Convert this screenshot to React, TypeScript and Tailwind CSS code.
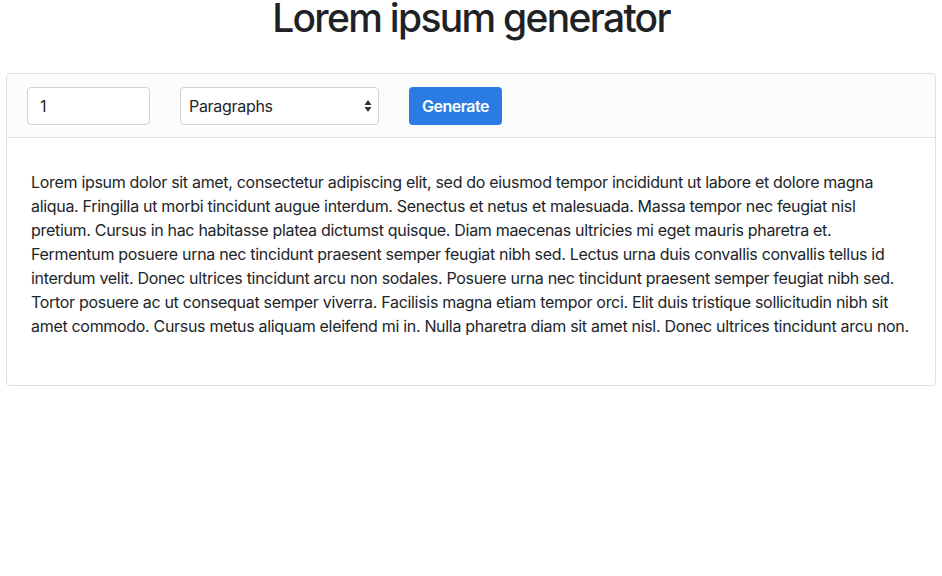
import React from "react";

const lines = [
  "Lorem ipsum dolor sit amet, consectetur adipiscing elit, sed do eiusmod tempor incididunt ut labore et dolore magna",
  "aliqua. Fringilla ut morbi tincidunt augue interdum. Senectus et netus et malesuada. Massa tempor nec feugiat nisl",
  "pretium. Cursus in hac habitasse platea dictumst quisque. Diam maecenas ultricies mi eget mauris pharetra et.",
  "Fermentum posuere urna nec tincidunt praesent semper feugiat nibh sed. Lectus urna duis convallis convallis tellus id",
  "interdum velit. Donec ultrices tincidunt arcu non sodales. Posuere urna nec tincidunt praesent semper feugiat nibh sed.",
  "Tortor posuere ac ut consequat semper viverra. Facilisis magna etiam tempor orci. Elit duis tristique sollicitudin nibh sit",
  "amet commodo. Cursus metus aliquam eleifend mi in. Nulla pharetra diam sit amet nisl. Donec ultrices tincidunt arcu non.",
];

export default function App() {
  return (
    <div
      className="w-[942px] h-[576px] bg-white text-[#212529] px-[6px] overflow-hidden"
      style={{ fontFamily: "Inter, 'Liberation Sans', sans-serif" }}
    >
      <div className="h-[73px]">
        <h1 className="text-[39px] leading-[36px] font-medium text-center tracking-[-1.7px] text-[#1f2225]">
          Lorem ipsum generator
        </h1>
      </div>
      <div className="border border-[#dfdfdf] rounded-[4px] w-[930px]">
        <div className="h-[64px] bg-[#fcfcfc] border-b border-[#dfdfdf] flex items-center pl-[20px] rounded-t-[4px]">
          <div className="w-[123px] h-[38px] border border-[#ced4da] rounded-[4px] bg-white flex items-center pl-[12px] text-[16px]">
            1
          </div>
          <div className="ml-[30px] w-[199px] h-[38px] border border-[#ced4da] rounded-[4px] bg-white flex items-center pl-[8px] pr-[6px] text-[16px] tracking-[-0.3px] justify-between">
            <span>Paragraphs</span>
            <svg width="8" height="14" viewBox="0 0 8 14">
              <path d="M4 1 L7.5 6 H0.5 Z" fill="#333" />
              <path d="M4 13 L7.5 8 H0.5 Z" fill="#333" />
            </svg>
          </div>
          <button className="ml-[30px] w-[93px] h-[38px] rounded-[4px] bg-[#2b7be4] text-white text-[16px] font-semibold tracking-[-0.5px] flex items-center justify-center">
            Generate
          </button>
        </div>
        <div className="pl-[24px] pt-[32px] pb-[47px]">
          <p className="text-[16px] leading-[24px] tracking-[-0.31px] whitespace-nowrap">
            {lines.map((l, i) => (
              <React.Fragment key={i}>
                {l}
                {i < lines.length - 1 && <br />}
              </React.Fragment>
            ))}
          </p>
        </div>
      </div>
    </div>
  );
}
